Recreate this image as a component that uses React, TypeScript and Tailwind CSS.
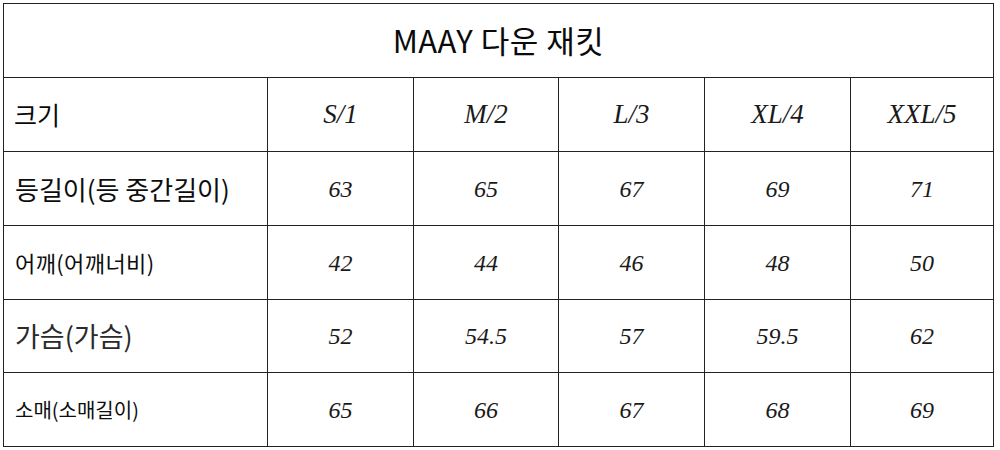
import React from "react";

const sizes = ["S/1", "M/2", "L/3", "XL/4", "XXL/5"];

const rows: { label: string; cls: string; values: string[]; h: string }[] = [
  { label: "등길이(등 중간길이)", cls: "text-[26px]", values: ["63", "65", "67", "69", "71"], h: "h-[74px]" },
  { label: "어깨(어깨너비)", cls: "text-[22px] tracking-[0.4px]", values: ["42", "44", "46", "48", "50"], h: "h-[74px]" },
  { label: "가슴(가슴)", cls: "text-[27px] text-[#2a2a2a]", values: ["52", "54.5", "57", "59.5", "62"], h: "h-[73px]" },
  { label: "소매(소매길이)", cls: "text-[20px]", values: ["65", "66", "67", "68", "69"], h: "h-[74px]" },
];

const kr = "[font-family:'Noto_Sans_CJK_KR','Noto_Sans',sans-serif] font-normal";

export default function App() {
  return (
    <div className="w-[1000px] h-[450px] bg-white pl-[3px] pt-[3px]">
      <table className="border-collapse table-fixed w-[991px] border-[1.5px] border-[#222]">
        <colgroup>
          <col className="w-[264px]" />
          <col className="w-[146px]" />
          <col className="w-[145px]" />
          <col className="w-[146px]" />
          <col className="w-[146px]" />
          <col />
        </colgroup>
        <tbody>
          <tr className="h-[74px]">
            <td
              colSpan={6}
              className={`border border-[#222] text-center text-[31px] tracking-[0.5px] text-[#0a0a0a] ${kr}`}
            >
              MAAY 다운 재킷
            </td>
          </tr>
          <tr className="h-[74px]">
            <td className={`border border-[#222] pl-[10px] text-[25px] text-[#0a0a0a] ${kr}`}>크기</td>
            {sizes.map((s) => (
              <td
                key={s}
                className="border border-[#222] text-center italic text-[27px] text-[#1a1a1a] [font-family:'Liberation_Serif',serif]"
              >
                {s}
              </td>
            ))}
          </tr>
          {rows.map((r) => (
            <tr key={r.label} className={r.h}>
              <td className={`border border-[#222] pl-[11px] text-[#0d0d0d] ${r.cls} ${kr}`}>{r.label}</td>
              {r.values.map((v, i) => (
                <td
                  key={i}
                  className="border border-[#222] text-center italic text-[24px] text-[#1a1a1a] [font-family:'Liberation_Serif',serif]"
                >
                  {v}
                </td>
              ))}
            </tr>
          ))}
        </tbody>
      </table>
    </div>
  );
}
